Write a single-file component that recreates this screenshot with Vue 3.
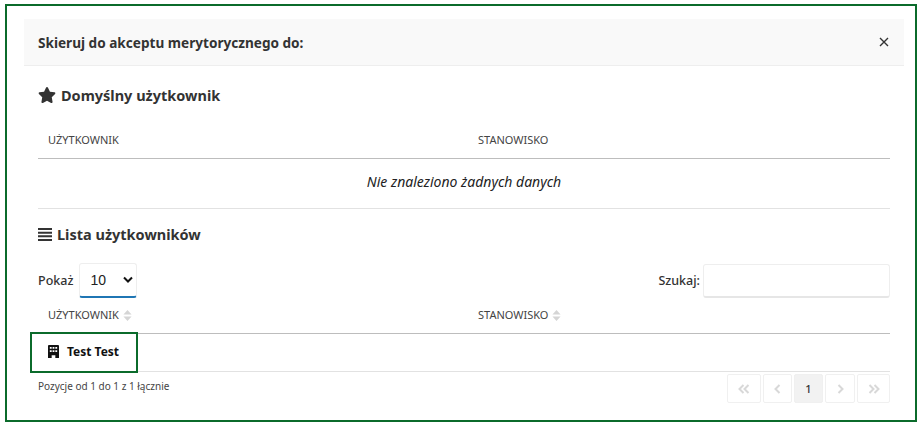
<template>
  <div class="frame">
    <div class="modal">
      <div class="modal-header">
        <h5>Skieruj do akceptu merytorycznego do:</h5>
        <svg class="close" viewBox="0 0 10 10" width="10" height="10">
          <path d="M1 1L9 9M9 1L1 9" stroke="#333" stroke-width="1.4" fill="none" />
        </svg>
      </div>
      <div class="modal-body">
        <h4 class="first-title">
          <svg class="star" viewBox="0 0 576 512" width="18" height="16">
            <path fill="#333" d="M259.3 17.8L194 150.2 47.9 171.5c-26.2 3.800-36.7 36.1-17.7 54.6l105.7 103-25 145.5c-4.500 26.3 23.2 46 46.4 33.7L288 439.6l130.7 68.7c23.2 12.2 50.9-7.400 46.4-33.7l-25-145.5 105.7-103c19-18.5 8.500-50.8-17.7-54.6L382 150.2 316.7 17.8c-11.7-23.6-45.6-23.9-57.4 0z" />
          </svg>
          Domyślny użytkownik
        </h4>
        <div class="thead plain">
          <span class="col-a">UŻYTKOWNIK</span>
          <span>STANOWISKO</span>
        </div>
        <div class="empty">Nie znaleziono żadnych danych</div>
        <h4 class="second-title">
          <svg viewBox="0 0 14 14" width="14" height="14">
            <path fill="#333" d="M0 1h14v2H0zM0 4.700h14v2H0zM0 8.300h14v2H0zM0 12h14v2H0z" />
          </svg>
          Lista użytkowników
        </h4>
        <div class="controls">
          <label class="show">
            Pokaż
            <span class="select">
              <span>10</span>
              <svg viewBox="0 0 10 8" width="10" height="8">
                <path d="M1 1.500L5 5.500L9 1.500" stroke="#111" stroke-width="2" fill="none" />
              </svg>
            </span>
          </label>
          <label class="search">
            Szukaj:
            <input type="text" />
          </label>
        </div>
        <div class="thead sorted">
          <span class="col-a">
            UŻYTKOWNIK
            <svg class="sort" viewBox="0 0 10 12" width="9" height="11">
              <path fill="#d5d5d5" d="M5 0L9.500 5H.5zM5 12L.5 7h9z" />
            </svg>
          </span>
          <span>
            STANOWISKO
            <svg class="sort" viewBox="0 0 10 12" width="9" height="11">
              <path fill="#d5d5d5" d="M5 0L9.500 5H.5zM5 12L.5 7h9z" />
            </svg>
          </span>
        </div>
        <div class="row">
          <div class="focused">
            <svg viewBox="0 0 12 14" width="11" height="13">
              <path fill="#111" fill-rule="evenodd" d="M1 0h10a1 1 0 0 1 1 1v13H8v-3H4v3H0V1a1 1 0 0 1 1-1zM2 2v2h2V2zM5 2v2h2V2zM8 2v2h2V2zM2 5.500v2h2v-2zM5 5.500v2h2v-2zM8 5.500v2h2v-2z" />
            </svg>
            Test Test
          </div>
        </div>
        <div class="footer">
          <span class="info">Pozycje od 1 do 1 z 1 łącznie</span>
          <div class="pager">
            <span class="page first">
              <svg viewBox="0 0 12 10" width="12" height="10"><path d="M5.500 1L1.500 5L5.500 9M10.500 1L6.500 5L10.500 9" /></svg>
            </span>
            <span class="page prev">
              <svg viewBox="0 0 7 10" width="7" height="10"><path d="M5.500 1L1.500 5L5.500 9" /></svg>
            </span>
            <span class="page current">1</span>
            <span class="page next">
              <svg viewBox="0 0 7 10" width="7" height="10"><path d="M1.500 1L5.500 5L1.500 9" /></svg>
            </span>
            <span class="page last">
              <svg viewBox="0 0 12 10" width="12" height="10"><path d="M1.500 1L5.500 5L1.500 9M6.500 1L10.500 5L6.500 9" /></svg>
            </span>
          </div>
        </div>
      </div>
    </div>
  </div>
</template>

<script setup>
</script>

<style>
html, body {
  margin: 0;
  background: #fff;
}
</style>

<style scoped>
.frame {
  box-sizing: border-box;
  width: 912px;
  height: 418px;
  margin: 4px 0 0 5px;
  border: 2px solid #0b6b2b;
  padding: 13px 11px 0 17px;
  font-family: "Noto Sans", "Liberation Sans", sans-serif;
  color: #333;
}
.modal-header {
  height: 47px;
  box-sizing: border-box;
  background: #f9f9f9;
  border-bottom: 1px solid #eee;
  display: flex;
  align-items: center;
  justify-content: space-between;
  padding: 0 14px;
}
h5 {
  margin: 0;
  font-size: 13.600px;
  font-weight: 700;
}
.close {
  margin-right: 1px;
}
.modal-body {
  padding: 0 14px;
}
h4 {
  margin: 0;
  font-size: 14.500px;
  font-weight: 700;
  display: flex;
  align-items: center;
  gap: 5px;
  height: 22px;
}
.first-title {
  padding-top: 18px;
}
.thead {
  display: flex;
  font-size: 11px;
  border-bottom: 1px solid #bdbdbd;
  box-sizing: border-box;
  padding-left: 10px;
  color: #444;
}
.thead.plain {
  height: 53px;
  padding-top: 26px;
  line-height: 16px;
}
.col-a {
  width: 430px;
}
.empty {
  height: 50px;
  box-sizing: border-box;
  border-bottom: 1px solid #e2e2e2;
  text-align: center;
  font-style: italic;
  font-size: 14px;
  line-height: 46px;
  color: #222;
}
.second-title {
  margin-top: 14px;
}
.controls {
  display: flex;
  justify-content: space-between;
  margin-top: 18px;
  font-size: 12.500px;
}
.show, .search {
  display: flex;
  align-items: center;
  gap: 3px;
  font-weight: 500;
}
.select {
  box-sizing: border-box;
  width: 58px;
  height: 35px;
  margin-left: 3px;
  border: 1px solid #eee;
  border-bottom: 2px solid #1f76b4;
  border-radius: 3px;
  display: flex;
  align-items: center;
  justify-content: space-between;
  padding: 0 3px 0 10px;
  font-family: "Liberation Sans", sans-serif;
  font-size: 14px;
  font-weight: 400;
  color: #222;
}
.search input {
  box-sizing: border-box;
  width: 187px;
  height: 34px;
  border: 1px solid #eee;
  border-bottom: 2px solid #e6e6e6;
  border-radius: 3px;
  outline: none;
}
.thead.sorted {
  height: 36px;
  line-height: 34px;
}
.sort {
  vertical-align: -2px;
  margin-left: 1px;
}
.row {
  height: 37px;
  border-bottom: 1px solid #e2e2e2;
}
.focused {
  box-sizing: border-box;
  width: 108px;
  height: 41px;
  margin-left: -8px;
  border: 2px solid #0b6b2b;
  display: flex;
  align-items: center;
  gap: 8px;
  padding: 0 0 2px 16px;
  font-size: 12px;
  font-weight: 700;
  color: #111;
  background: #fff;
  position: relative;
  top: -2px;
}
.footer {
  display: flex;
  justify-content: space-between;
  align-items: center;
  padding-top: 2px;
}
.info {
  font-size: 10px;
  color: #444;
  margin-bottom: 6px;
}
.pager {
  display: flex;
  gap: 2px;
}
.page {
  box-sizing: border-box;
  height: 29px;
  width: 29px;
  border: 1px solid #f0f0f0;
  border-radius: 2px;
  display: flex;
  align-items: center;
  justify-content: center;
}
.page svg path {
  fill: none;
  stroke: #d8d8d8;
  stroke-width: 2;
}
.page.first {
  width: 34px;
}
.page.next {
  width: 30px;
}
.page.last {
  width: 33px;
}
.page.current {
  background: #f2f2f2;
  color: #333;
  font-size: 11px;
  font-weight: 500;
}
</style>
